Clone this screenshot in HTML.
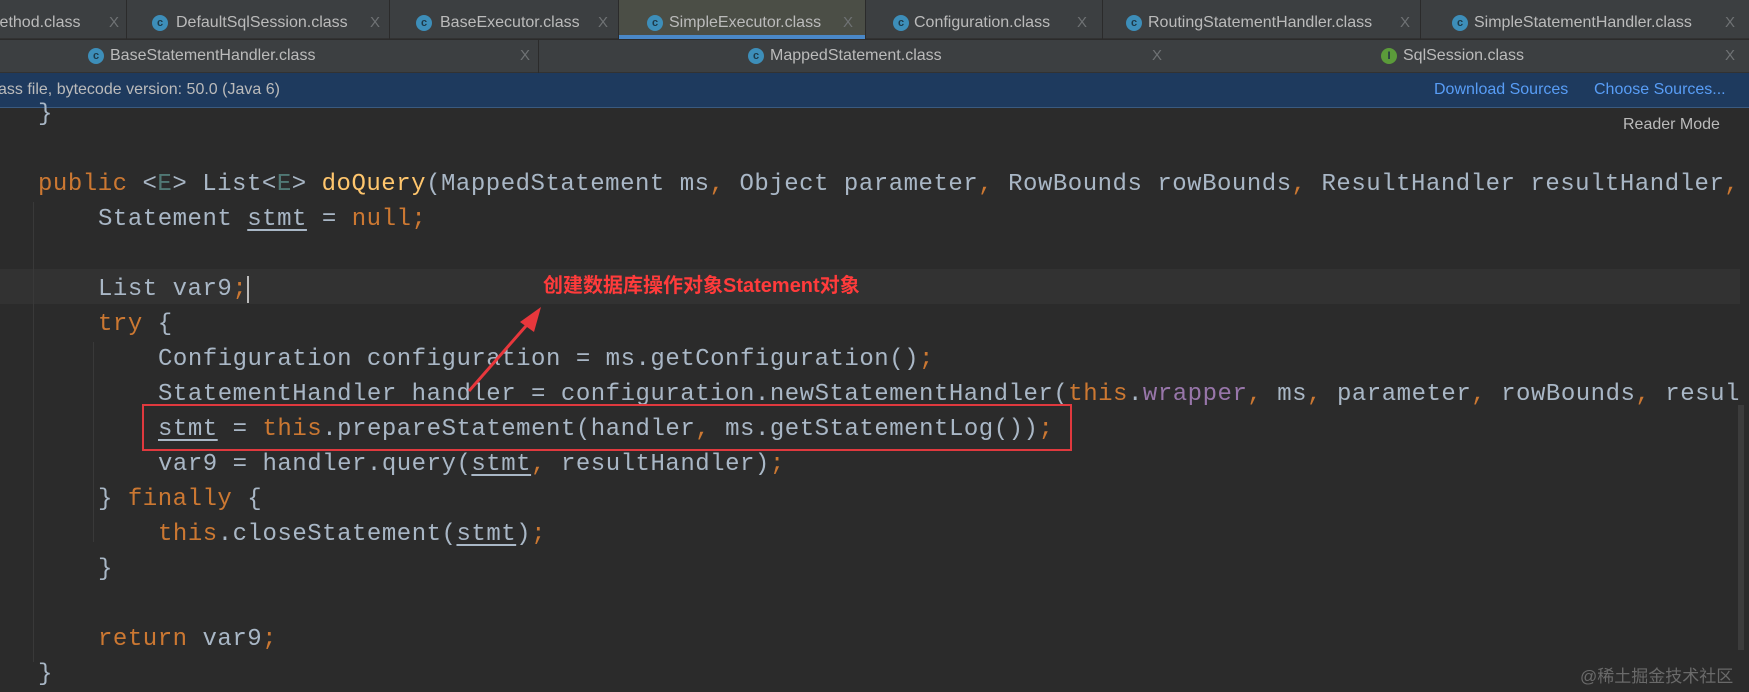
<!DOCTYPE html>
<html><head><meta charset="utf-8"><style>
*{margin:0;padding:0;box-sizing:border-box}
body{width:1749px;height:692px;background:#2b2b2b;overflow:hidden;position:relative;font-family:"Liberation Sans",sans-serif}
.a{position:absolute;white-space:pre}
.tabs{position:absolute;left:0;width:1749px;background:#3c3f41;border-bottom:1px solid #323232}
.t{position:absolute;color:#bbbbbb;font-size:16px;line-height:20px}
.x{position:absolute;color:#6f7274;font-size:15px;line-height:20px}
.sep{position:absolute;width:1px;background:#2b2b2b}
.ic{position:absolute;width:16px;height:16px;border-radius:50%;background:#3d8eb9;color:#1d3a4a;font-size:11px;font-weight:bold;text-align:center;line-height:16px}
.code{position:absolute;font-family:"Liberation Mono",monospace;font-size:24px;letter-spacing:0.52px;line-height:35px;color:#a9b7c6;white-space:pre}
.k{color:#cc7832}.m{color:#ffc66d}.p{color:#9876aa}.g{color:#507874}
.u{text-decoration:underline;text-underline-offset:4px}
</style></head><body>
<div class="tabs" style="top:0;height:39px"></div>
<div class="tabs" style="top:39px;height:34px;border-top:1px solid #2b2b2b"></div>
<div class="a" style="left:618px;top:0;width:247px;height:39px;background:#4b4e46"></div>
<div class="a" style="left:618px;top:35px;width:247px;height:4px;background:#4a88c7"></div>
<div class="sep" style="left:126px;top:0;height:39px"></div>
<div class="sep" style="left:389px;top:0;height:39px"></div>
<div class="sep" style="left:618px;top:0;height:39px"></div>
<div class="sep" style="left:865px;top:0;height:39px"></div>
<div class="sep" style="left:1102px;top:0;height:39px"></div>
<div class="sep" style="left:1420px;top:0;height:39px"></div>
<div class="sep" style="left:538px;top:39px;height:34px"></div>

<div class="t" style="left:-4px;top:13px">lethod.class</div><div class="x" style="left:109px;top:13px">X</div>
<div class="ic" style="left:152px;top:15px">c</div><div class="t" style="left:176px;top:13px">DefaultSqlSession.class</div><div class="x" style="left:370px;top:13px">X</div>
<div class="ic" style="left:416px;top:15px">c</div><div class="t" style="left:440px;top:13px">BaseExecutor.class</div><div class="x" style="left:598px;top:13px">X</div>
<div class="ic" style="left:647px;top:15px">c</div><div class="t" style="left:669px;top:13px">SimpleExecutor.class</div><div class="x" style="left:843px;top:13px">X</div>
<div class="ic" style="left:893px;top:15px">c</div><div class="t" style="left:914px;top:13px">Configuration.class</div><div class="x" style="left:1077px;top:13px">X</div>
<div class="ic" style="left:1126px;top:15px">c</div><div class="t" style="left:1148px;top:13px">RoutingStatementHandler.class</div><div class="x" style="left:1400px;top:13px">X</div>
<div class="ic" style="left:1452px;top:15px">c</div><div class="t" style="left:1474px;top:13px">SimpleStatementHandler.class</div><div class="x" style="left:1725px;top:13px">X</div>

<div class="ic" style="left:88px;top:48px">c</div><div class="t" style="left:110px;top:46px">BaseStatementHandler.class</div><div class="x" style="left:520px;top:46px">X</div>
<div class="ic" style="left:748px;top:48px">c</div><div class="t" style="left:770px;top:46px">MappedStatement.class</div><div class="x" style="left:1152px;top:46px">X</div>
<div class="ic" style="left:1381px;top:48px;background:#5b9b3a;color:#234">I</div><div class="t" style="left:1403px;top:46px">SqlSession.class</div><div class="x" style="left:1725px;top:46px">X</div>

<div class="a" style="left:0;top:73px;width:1749px;height:35px;background:#1e3a5e;border-bottom:1px solid #3a5a80"></div>
<div class="a" style="left:-2px;top:81px;color:#bbbbbb;font-size:16px">ass file, bytecode version: 50.0 (Java 6)</div>
<div class="a" style="left:1434px;top:81px;color:#589df6;font-size:16px">Download Sources</div>
<div class="a" style="left:1594px;top:81px;color:#589df6;font-size:16px">Choose Sources...</div>
<div class="a" style="left:1623px;top:116px;color:#bbbbbb;font-size:16px">Reader Mode</div>

<div class="a" style="left:0;top:269px;width:1740px;height:35px;background:#323232"></div>
<div class="a" style="left:33px;top:202px;width:1px;height:460px;background:#393939"></div>
<div class="a" style="left:93px;top:342px;width:1px;height:200px;background:#393939"></div>
<div class="a" style="left:1738px;top:405px;width:6px;height:245px;background:#3c3c3c"></div>

<div class="code" style="left:38px;top:97px">}</div>
<div class="code" style="left:38px;top:167px"><span class="k">public</span> &lt;<span class="g">E</span>&gt; List&lt;<span class="g">E</span>&gt; <span class="m">doQuery</span>(MappedStatement ms<span class="k">,</span> Object parameter<span class="k">,</span> RowBounds rowBounds<span class="k">,</span> ResultHandler resultHandler<span class="k">,</span></div>
<div class="code" style="left:98px;top:202px">Statement <span class="u">stmt</span> = <span class="k">null;</span></div>
<div class="code" style="left:98px;top:272px">List var9<span class="k">;</span><span style="border-left:2px solid #bbb"></span></div>
<div class="code" style="left:98px;top:307px"><span class="k">try</span> {</div>
<div class="code" style="left:158px;top:342px">Configuration configuration = ms.getConfiguration()<span class="k">;</span></div>
<div class="code" style="left:158px;top:377px">StatementHandler handler = configuration.newStatementHandler(<span class="k">this</span>.<span class="p">wrapper</span><span class="k">,</span> ms<span class="k">,</span> parameter<span class="k">,</span> rowBounds<span class="k">,</span> resul</div>
<div class="code" style="left:158px;top:412px"><span class="u">stmt</span> = <span class="k">this</span>.prepareStatement(handler<span class="k">,</span> ms.getStatementLog())<span class="k">;</span></div>
<div class="code" style="left:158px;top:447px">var9 = handler.query(<span class="u">stmt</span><span class="k">,</span> resultHandler)<span class="k">;</span></div>
<div class="code" style="left:98px;top:482px">} <span class="k">finally</span> {</div>
<div class="code" style="left:158px;top:517px"><span class="k">this</span>.closeStatement(<span class="u">stmt</span>)<span class="k">;</span></div>
<div class="code" style="left:98px;top:552px">}</div>
<div class="code" style="left:98px;top:622px"><span class="k">return</span> var9<span class="k">;</span></div>
<div class="code" style="left:38px;top:657px">}</div>

<div class="a" style="left:142px;top:404px;width:930px;height:47px;border:2px solid #e0393e"></div>
<svg class="a" style="left:0;top:0" width="1749" height="692"><line x1="469" y1="391" x2="533" y2="318" stroke="#e8373c" stroke-width="3"/><polygon points="541,307 520,322 534,332" fill="#e8373c"/></svg>
<div class="a" style="left:543px;top:269px;color:#ff3b3b;font-size:20px;font-weight:bold;font-family:'Liberation Sans','Noto Sans CJK SC',sans-serif">创建数据库操作对象Statement对象</div>
<div class="a" style="left:1580px;top:662px;color:#6a6a6a;font-size:17px;font-family:'Liberation Sans','Noto Sans CJK SC',sans-serif">@稀土掘金技术社区</div>
</body></html>
